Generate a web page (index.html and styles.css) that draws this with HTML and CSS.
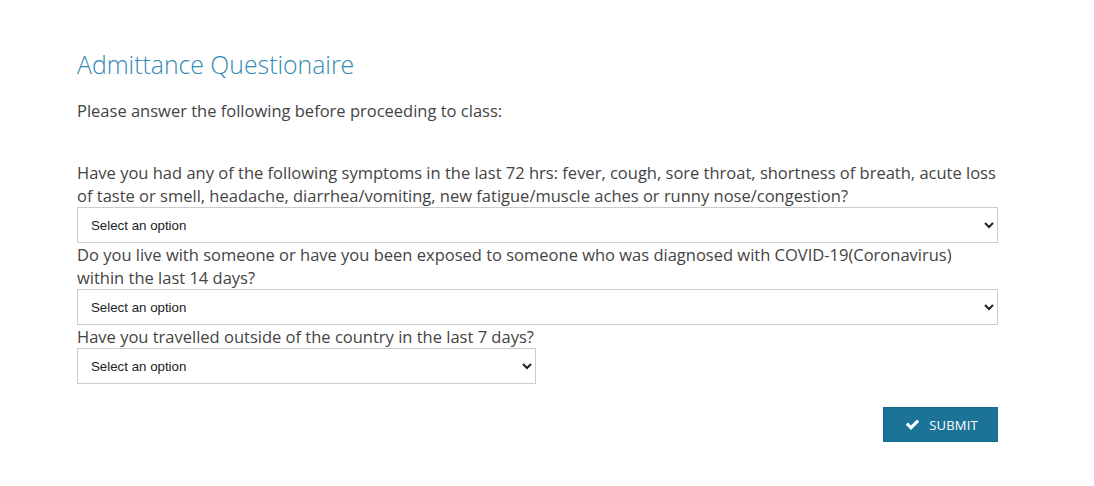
FILE: index.html
```html
<!DOCTYPE html>
<html lang="en">
<head>
    <meta charset="UTF-8">
    <meta name="viewport" content="width=device-width, initial-scale=1.0">
    <title>Admittance Questionaire</title>
    <link rel="stylesheet" href="styles.css">
</head>
<body>
    <div class="questionaire">
        <h1 class="q-title">Admittance Questionaire</h1>
        <p class="q-intro">Please answer the following before proceeding to class:</p>

        <form class="q-form">
            <label class="q-label" for="q1">Have you had any of the following symptoms in the last 72 hrs: fever, cough, sore throat, shortness of breath, acute loss of taste or smell, headache, diarrhea/vomiting, new fatigue/muscle aches or runny nose/congestion?</label>
            <select class="q-select" id="q1">
                <option value="">Select an option</option>
                <option value="yes">Yes</option>
                <option value="no">No</option>
            </select>

            <label class="q-label" for="q2">Do you live with someone or have you been exposed to someone who was diagnosed with COVID-19(Coronavirus) within the last 14 days?</label>
            <select class="q-select" id="q2">
                <option value="">Select an option</option>
                <option value="yes">Yes</option>
                <option value="no">No</option>
            </select>

            <label class="q-label" for="q3">Have you travelled outside of the country in the last 7 days?</label>
            <select class="q-select q-select-half" id="q3">
                <option value="">Select an option</option>
                <option value="yes">Yes</option>
                <option value="no">No</option>
            </select>

            <div class="q-actions">
                <button type="button" class="q-submit">
                    <svg class="q-check" viewBox="0 0 1792 1792" width="15" height="15">
                        <path d="M1671 566q0 40-28 68l-724 724-136 136q-28 28-68 28t-68-28l-136-136-362-362q-28-28-28-68t28-68l136-136q28-28 68-28t68 28l294 295 656-657q28-28 68-28t68 28l136 136q28 28 28 68z" fill="#ffffff"/>
                    </svg>
                    SUBMIT
                </button>
            </div>
        </form>
    </div>
</body>
</html>
```

FILE: styles.css
```css
body{
    margin: 0;
    background-color: #ffffff;
    font-family: "Open Sans", sans-serif;
    color: #444444;
}
.questionaire{
    width: 921px;
    padding: 49px 0 0 77px;
}
.q-title{
    margin: 0;
    font-size: 24.8px;
    line-height: 30px;
    font-weight: 300;
    color: #3489b5;
}
.q-intro{
    margin: 20px 0 0;
    font-size: 16.5px;
    line-height: 23px;
}
.q-form{
    display: flex;
    flex-direction: column;
    align-items: flex-start;
    margin-top: 39px;
}
.q-label{
    font-size: 16.5px;
    line-height: 23px;
    color: #444444;
}
/* native select look, arrow on the right */
.q-select{
    width: 100%;
    height: 36px;
    padding: 0 8px 0 9px;
    border: 1px solid #cccccc;
    border-radius: 0;
    background-color: #ffffff;
    font-family: "Liberation Sans", Arial, sans-serif;
    font-size: 13.3px;
    color: #222222;
}
.q-select-half{
    width: 459px;
}
.q-actions{
    align-self: stretch;
    display: flex;
    justify-content: flex-end;
    margin-top: 23px;
}
.q-submit{
    display: flex;
    align-items: center;
    justify-content: center;
    gap: 9px;
    width: 115px;
    height: 35px;
    padding: 0 0 0 2px;
    border: 1px solid #16698c;
    background-color: #1b7398;
    color: #ffffff;
    font-family: "Open Sans", sans-serif;
    font-size: 13px;
    letter-spacing: 0.2px;
    cursor: pointer;
}
```
